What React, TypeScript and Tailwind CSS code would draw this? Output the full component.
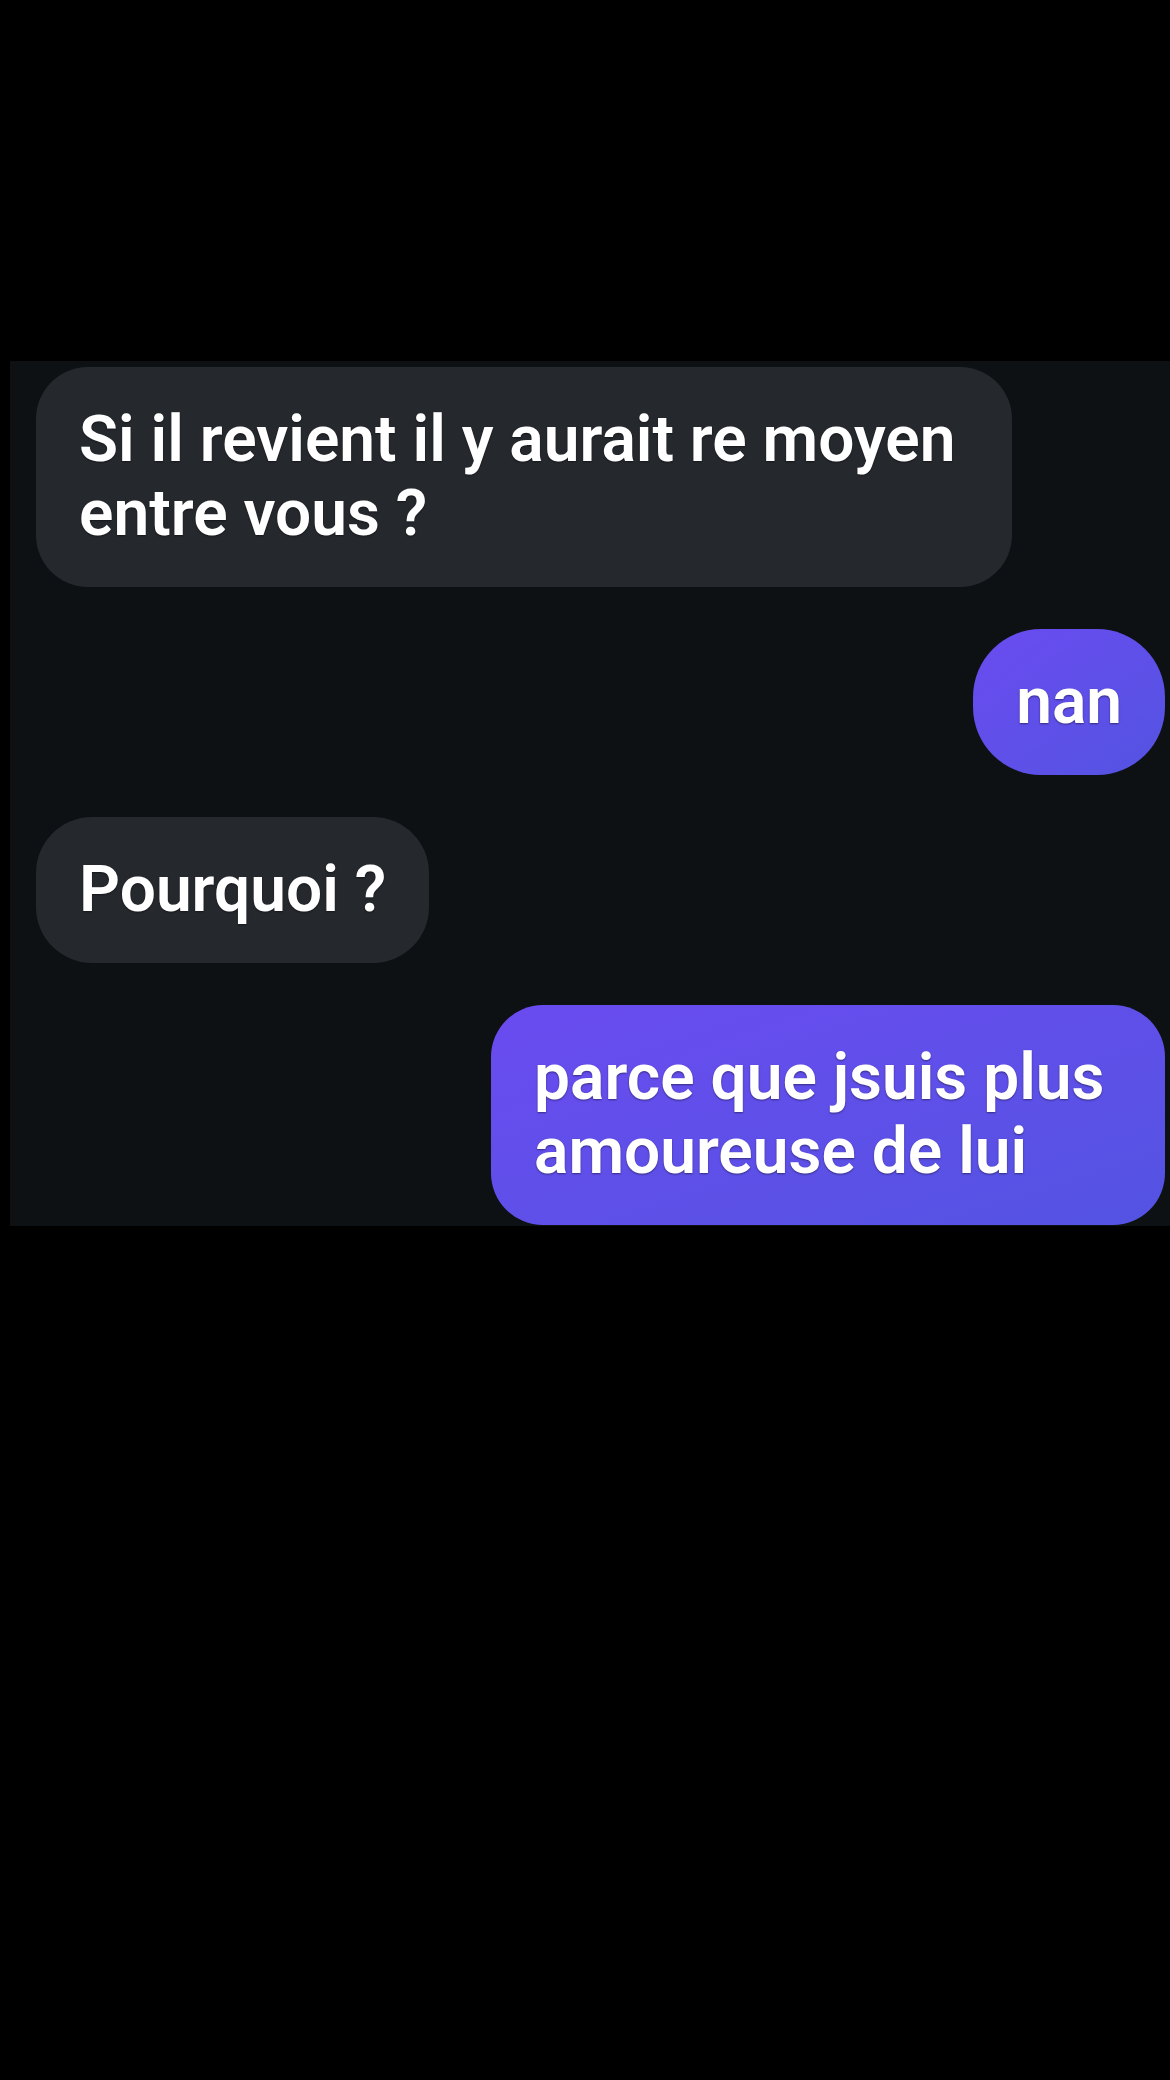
const messages = [
  { id: 1, mine: false, lines: ['Si il revient il y aurait re moyen', 'entre vous ?'], extra: 'w-[976px] rounded-[52px]' },
  { id: 2, mine: true, lines: ['nan'], extra: 'rounded-[68px]' },
  { id: 3, mine: false, lines: ['Pourquoi ?'], extra: 'rounded-[56px]' },
  { id: 4, mine: true, lines: ['parce que jsuis plus', 'amoureuse de lui'], extra: 'w-[674px] rounded-[52px]' },
];

const Bubble = ({ mine, lines, extra }: { mine: boolean; lines: string[]; extra: string }) => (
  <div
    className={
      'px-[43px] py-[36px] text-[64px] font-semibold leading-[74px] text-white whitespace-nowrap [text-shadow:0_1px_2px_rgba(0,0,0,0.45)] ' +
      extra +
      (mine
        ? ' self-end bg-gradient-to-br from-[#6a4bf0] to-[#5353e2]'
        : ' self-start bg-[#25282d]')
    }
  >
    {lines.map((line) => (
      <div key={line}>{line}</div>
    ))}
  </div>
);

export default function App() {
  return (
    <div className="min-h-[2080px] w-full bg-black pt-[361px] font-['Roboto','Liberation_Sans',sans-serif]">
      {/* chat screenshot panel */}
      <div className="ml-[10px] flex h-[865px] flex-col gap-[42px] overflow-hidden bg-[#0e1114] pl-[26px] pr-[5px] pt-[6px]">
        {messages.map((m) => (
          <Bubble key={m.id} mine={m.mine} lines={m.lines} extra={m.extra} />
        ))}
      </div>
    </div>
  );
}
